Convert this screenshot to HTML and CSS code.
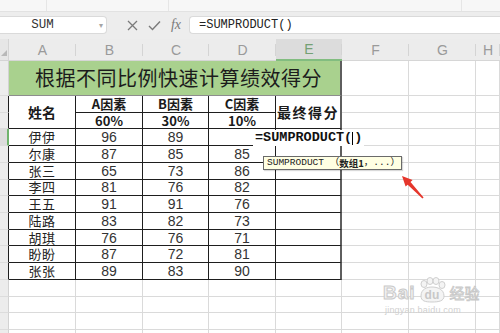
FILE: index.html
```html
<!DOCTYPE html>
<html lang="zh">
<head>
<meta charset="utf-8">
<link rel="stylesheet" href="styles.css">
</head>
<body>
<div class="topstrip"><div class="seg s1"></div><div class="seg s2"></div><div class="seg s3"></div></div>
<div class="fbar">
  <div class="namebox"><span class="nbtext">SUM</span><span class="dd">▾</span></div>
  <div class="fbtns">
    <span class="fb"><svg width="11" height="11" viewBox="0 0 11 11"><path d="M1 1L10 10M10 1L1 10" stroke="#7a7a7a" stroke-width="1.3" fill="none"/></svg></span>
    <span class="fb"><svg width="13" height="11" viewBox="0 0 13 11"><path d="M1 6L4.5 9.5L12 1.5" stroke="#7a7a7a" stroke-width="1.4" fill="none"/></svg></span>
    <span class="fb fx">fx</span>
  </div>
  <div class="finput">=SUMPRODUCT()</div>
</div>
<div class="sheet">
  <div class="corner"><span class="tri"></span></div>
  <div class="ch">A</div><div class="ch">B</div><div class="ch">C</div><div class="ch">D</div><div class="ch sel">E</div><div class="ch">F</div><div class="ch">G</div><div class="ch">H</div>

  <div class="rh"></div>
  <div class="title">根据不同比例快速计算绩效得分</div>
  <div class="c"></div><div class="c"></div><div class="c"></div>

  <div class="rh tb"></div>
  <div class="t hd span2">姓名</div>
  <div class="t hd">A因素</div><div class="t hd">B因素</div><div class="t hd">C因素</div>
  <div class="t te hd span2 wide">最终得分</div>
  <div class="c"></div><div class="c"></div><div class="c"></div>

  <div class="rh tb"></div>
  <div class="t hd">60%</div><div class="t hd">30%</div><div class="t hd">10%</div>
  <div class="c"></div><div class="c"></div><div class="c"></div>

  <div class="rh tb rsel"></div>
  <div class="t nm">伊伊</div><div class="t n">96</div><div class="t n">89</div><div class="t n"></div>
  <div class="t te esel"></div>
  <div class="c"></div><div class="c"></div><div class="c"></div>

  <div class="rh tb"></div>
  <div class="t nm">尔康</div><div class="t n">87</div><div class="t n">85</div><div class="t n">85</div><div class="t te"></div>
  <div class="c"></div><div class="c"></div><div class="c"></div>

  <div class="rh tb"></div>
  <div class="t nm">张三</div><div class="t n">65</div><div class="t n">73</div><div class="t n">86</div><div class="t te"></div>
  <div class="c"></div><div class="c"></div><div class="c"></div>

  <div class="rh tb"></div>
  <div class="t nm">李四</div><div class="t n">81</div><div class="t n">76</div><div class="t n">82</div><div class="t te"></div>
  <div class="c"></div><div class="c"></div><div class="c"></div>

  <div class="rh tb"></div>
  <div class="t nm">王五</div><div class="t n">91</div><div class="t n">91</div><div class="t n">76</div><div class="t te"></div>
  <div class="c"></div><div class="c"></div><div class="c"></div>

  <div class="rh tb"></div>
  <div class="t nm">陆路</div><div class="t n">83</div><div class="t n">82</div><div class="t n">73</div><div class="t te"></div>
  <div class="c"></div><div class="c"></div><div class="c"></div>

  <div class="rh tb"></div>
  <div class="t nm">胡琪</div><div class="t n">76</div><div class="t n">76</div><div class="t n">71</div><div class="t te"></div>
  <div class="c"></div><div class="c"></div><div class="c"></div>

  <div class="rh tb"></div>
  <div class="t nm">盼盼</div><div class="t n">87</div><div class="t n">72</div><div class="t n">81</div><div class="t te"></div>
  <div class="c"></div><div class="c"></div><div class="c"></div>

  <div class="rh tb"></div>
  <div class="t nm">张张</div><div class="t n">89</div><div class="t n">83</div><div class="t n">90</div><div class="t te"></div>
  <div class="c"></div><div class="c"></div><div class="c"></div>

  <div class="rh"></div><div class="c"></div><div class="c"></div><div class="c"></div><div class="c"></div><div class="c"></div><div class="c"></div><div class="c"></div><div class="c"></div>
  <div class="rh"></div><div class="c"></div><div class="c"></div><div class="c"></div><div class="c"></div><div class="c"></div><div class="c"></div><div class="c"></div><div class="c"></div>
  <div class="rh"></div><div class="c"></div><div class="c"></div><div class="c"></div><div class="c"></div><div class="c"></div><div class="c"></div><div class="c"></div><div class="c"></div>
  <div class="rh"></div><div class="c"></div><div class="c"></div><div class="c"></div><div class="c"></div><div class="c"></div><div class="c"></div><div class="c"></div><div class="c"></div>

  <div class="edit">=SUMPRODUCT(<span class="caret"></span>)</div>
  <div class="tip">SUMPRODUCT （<b>数组1</b>，...）</div>
  <svg class="arrow" width="30" height="30" viewBox="0 0 30 30">
    <polygon points="4,4 14.6,8 12.5,10 25.6,25.4 24.4,26.6 9.7,12.8 7.6,14.6" fill="#e5362c"/>
  </svg>
  <div class="wm">
    <div class="wmrow">
      <span class="bai">Bai</span>
      <span class="du"><svg class="paw" width="30" height="26" viewBox="0 0 30 26"><ellipse cx="7" cy="7" rx="3" ry="3.5" fill="#f4f4f4" stroke="#cfcfcf"/><ellipse cx="13" cy="4" rx="3" ry="3.5" fill="#f4f4f4" stroke="#cfcfcf"/><ellipse cx="19" cy="4" rx="3" ry="3.5" fill="#f4f4f4" stroke="#cfcfcf"/><ellipse cx="25" cy="8" rx="3" ry="3.5" fill="#f4f4f4" stroke="#cfcfcf"/><path d="M4 19C4 12 10 10 15 10C20 10 27 12 27 19C27 24 22 25 15 25C8 25 4 24 4 19Z" fill="#f4f4f4" stroke="#cfcfcf"/></svg><span class="dutext">du</span></span>
      <span class="jy">经验</span>
    </div>
    <div class="url">jingyan.baidu.com</div>
  </div>
</div>
</body>
</html>
```
FILE: styles.css
```css
* { box-sizing: border-box; }
html, body { margin: 0; padding: 0; }
body {
  width: 500px;
  height: 333px;
  overflow: hidden;
  background: #ffffff;
  font-family: "Liberation Sans", "Noto Sans CJK SC", sans-serif;
}

.topstrip {
  height: 12px;
  background: #f7f7f7;
  border-bottom: 1px solid #e2e2e2;
  display: flex;
}
.topstrip .seg { height: 100%; border-right: 1px solid #e6e6e6; }
.topstrip .s1 { width: 47px; }
.topstrip .s2 { width: 122px; }
.topstrip .s3 { width: 293px; }

.fbar {
  height: 27px;
  background: #ededed;
  display: flex;
  align-items: flex-start;
  padding-top: 4px;
}
.namebox {
  width: 107px;
  height: 18px;
  background: #ffffff;
  border: 1px solid #dadada;
  border-left: none;
  border-radius: 0 4px 4px 0;
  display: flex;
  align-items: center;
}
.nbtext {
  width: 85px;
  text-align: center;
  font-family: "Liberation Mono", monospace;
  font-size: 12.5px;
  color: #333;
}
.dd {
  flex: 1;
  text-align: right;
  padding-right: 3px;
  font-size: 8px;
  color: #a5a5a5;
}
.fbtns {
  display: flex;
  padding-left: 14px;
  width: 82px;
  height: 18px;
  align-items: center;
}
.fb {
  width: 22px;
  display: flex;
  justify-content: center;
  align-items: center;
}
.fx {
  font-family: "Liberation Serif", serif;
  font-style: italic;
  font-size: 14px;
  color: #7a7a7a;
}
.finput {
  flex: 1;
  height: 18px;
  background: #ffffff;
  border: 1px solid #dadada;
  border-right: none;
  border-radius: 4px 0 0 4px;
  padding-left: 9px;
  font-family: "Liberation Mono", monospace;
  font-size: 12px;
  line-height: 16px;
  color: #222;
}

.sheet {
  position: relative;
  display: grid;
  grid-template-columns: 9px 67px 67px 66px 67px 66px 67px 67px 1fr;
  grid-template-rows: 22px 35px;
  grid-auto-rows: 16.73px;
  line-height: 14px;
}
.sheet > div { display: flex; align-items: center; justify-content: center; }

.corner {
  background: #e6e6e6;
  border-right: 1px solid #d4d4d4;
  border-bottom: 1px solid #d4d4d4;
  position: relative;
}
.tri {
  position: absolute;
  right: 1px;
  bottom: 4px;
  width: 0; height: 0;
  border-left: 6px solid transparent;
  border-bottom: 6px solid #b8b8b8;
}
.ch {
  position: relative;
  background: #ececec;
  border-bottom: 1px solid #d6d6d6;
  color: #9a9a9a;
  font-size: 14px;
}
.ch::after {
  content: "";
  position: absolute;
  right: 0; top: 5px; bottom: 4px;
  width: 1px;
  background: #d4d4d4;
}
.ch.sel {
  background: #dcdcdc;
  color: #74a074;
  border-bottom: 2px solid #82bd80;
}

.rh {
  background: #ececec;
  border-right: 1px solid #d2d2d2;
  border-bottom: 1px solid #dcdcdc;
}
.rh.tb { border-right-color: #1e1e1e; }
.rh.rsel { background: #dcdcdc; border-right: 2px solid #6fb46c; }

.c {
  border-right: 1px solid #dadada;
  border-bottom: 1px solid #dadada;
}

.title {
  grid-column: span 5;
  background: #a9d18e;
  border-right: 2px solid #5e5e5e;
  border-bottom: 1px solid #8d8d8d;
  font-family: "Noto Sans CJK SC", sans-serif;
  font-size: 20px;
  line-height: 26px;
  letter-spacing: 0.5px;
  color: #1c1c1c;
  padding-left: 8px;
}

.t {
  border-right: 1px solid #1e1e1e;
  border-bottom: 1px solid #1e1e1e;
}
.te { border-right: 2px solid #5e5e5e; }
.esel { border-bottom: 2px solid #75b872; }

.hd {
  font-family: "Noto Sans CJK SC", sans-serif;
  font-weight: 700;
  font-size: 13px;
  color: #1a1a1a;
}
.span2 { grid-row: span 2; font-size: 14px; }
.wide { letter-spacing: 1.5px; }

.nm {
  font-family: "Noto Sans CJK SC", sans-serif;
  font-size: 13px;
  letter-spacing: 0.5px;
  color: #222;
}
.n {
  font-size: 14px;
  color: #333;
}

.sheet > .edit {
  position: absolute;
  left: 253px;
  top: 91px;
  height: 16px;
  padding: 0 2px;
  background: #ffffff;
  font-family: "Liberation Mono", monospace;
  font-weight: 700;
  font-size: 13.5px;
  color: #111;
  white-space: nowrap;
  justify-content: flex-start;
}
.caret {
  display: inline-block;
  width: 1px;
  height: 13px;
  background: #000;
  margin: 0 1px 0 0;
}
.sheet > .tip {
  position: absolute;
  left: 263px;
  top: 117px;
  width: 139px;
  height: 14px;
  background: #ffffe3;
  border: 1px solid #6a6a6a;
  box-shadow: 1px 1px 1px rgba(0,0,0,0.15);
  font-family: "Liberation Mono", "Noto Sans CJK SC", monospace;
  font-size: 9.5px;
  line-height: 12px;
  color: #222;
  white-space: nowrap;
  justify-content: flex-start;
  padding-left: 3px;
}
.tip b { font-family: "Noto Sans CJK SC", sans-serif; font-weight: 700; }
.arrow {
  position: absolute;
  left: 398px;
  top: 133px;
}

.sheet > .wm {
  position: absolute;
  left: 383px;
  top: 238px;
  flex-direction: column;
  align-items: flex-start;
}
.wmrow { display: flex; align-items: flex-end; }
.bai {
  font-family: "Liberation Sans", sans-serif;
  font-weight: 700;
  font-size: 19px;
  color: #f2f2f2;
  -webkit-text-stroke: 1px #cacaca;
  letter-spacing: 1px;
  line-height: 20px;
}
.du { position: relative; width: 30px; height: 26px; margin-left: 1px; }
.paw { display: block; }
.dutext {
  position: absolute;
  left: 8px;
  bottom: 1px;
  font-weight: 700;
  font-size: 12px;
  line-height: 14px;
  color: #c8c8c8;
}
.jy {
  font-family: "Noto Sans CJK SC", sans-serif;
  font-size: 15px;
  color: #f2f2f2;
  -webkit-text-stroke: 0.8px #c8c8c8;
  margin-left: 3px;
  line-height: 20px;
}
.url {
  font-size: 9px;
  line-height: 11px;
  color: #d0d0d0;
  margin-left: 2px;
  margin-top: 2px;
  letter-spacing: 0.2px;
}
```
